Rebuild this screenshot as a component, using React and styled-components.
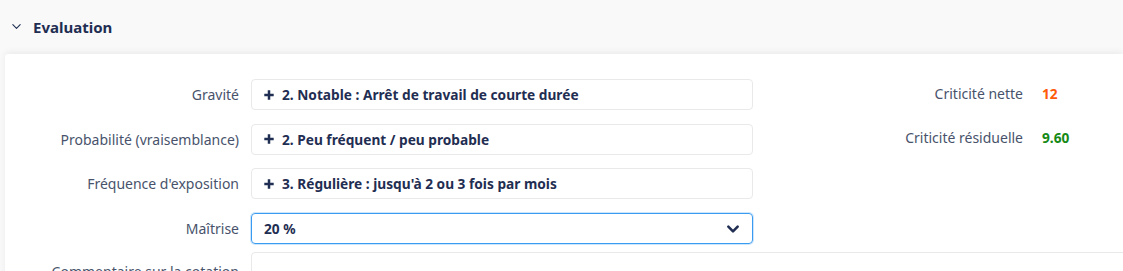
import React from "react";
import styled, { createGlobalStyle } from "styled-components";

const GlobalStyle = createGlobalStyle`
  html, body {
    margin: 0;
    padding: 0;
    background: #f9f9f9;
    font-family: "Noto Sans", "Open Sans", sans-serif;
    overflow: hidden;
  }
`;

const Page = styled.div`
  width: 1123px;
  height: 271px;
  background: #f9f9f9;
  overflow: hidden;
`;

const SectionHeader = styled.div`
  height: 54px;
  display: flex;
  align-items: center;
  gap: 11px;
  padding-left: 11px;
  box-sizing: border-box;
  padding-bottom: 1px;
`;

const SectionTitle = styled.h2`
  margin: 0;
  font-size: 15px;
  font-weight: 700;
  color: #1f2e52;
`;

const Panel = styled.div`
  margin-left: 5px;
  background: #fff;
  border-radius: 3px 0 0 0;
  box-shadow: 0 -2px 6px rgba(0, 0, 0, 0.06);
  padding-top: 25px;
  height: 300px;
  display: flex;
  flex-direction: column;
  gap: 8px;
`;

const TopArea = styled.div`
  display: flex;
`;

const FormColumn = styled.div`
  display: flex;
  flex-direction: column;
  gap: 13.7px;
`;

const Row = styled.div`
  display: flex;
  align-items: ${(p) => (p.$top ? "flex-start" : "center")};
`;

const Label = styled.label`
  width: 246px;
  flex-shrink: 0;
  padding-right: 12px;
  box-sizing: border-box;
  text-align: right;
  font-size: 14px;
  color: #48536b;
  white-space: nowrap;
  padding-top: ${(p) => (p.$top ? "10px" : "0")};
`;

const Field = styled.div`
  width: 502px;
  height: 31px;
  box-sizing: border-box;
  border: 1px solid ${(p) => (p.$focused ? "#3a9cf0" : "#e9e9e9")};
  box-shadow: ${(p) => (p.$focused ? "0 0 0 1px rgba(58,156,240,0.25)" : "none")};
  border-radius: 4px;
  display: flex;
  align-items: center;
  gap: 8px;
  padding: 0 12px 0 12px;
  font-size: 13.7px;
  font-weight: 700;
  color: #1f2e52;
`;

const TextArea = styled.div`
  width: 900px;
  flex-shrink: 0;
  height: 60px;
  box-sizing: border-box;
  border: 1px solid #e9e9e9;
  border-radius: 4px;
`;

const FieldText = styled.span`
  flex: 1;
  white-space: nowrap;
`;

const SideColumn = styled.div`
  margin-left: 120px;
  padding-top: 5px;
  display: grid;
  grid-template-columns: 150px auto;
  column-gap: 19px;
  row-gap: 25px;
  align-content: start;
`;

const SideLabel = styled.span`
  text-align: right;
  font-size: 14px;
  color: #48536b;
`;

const SideValue = styled.span`
  font-size: 13.7px;
  font-weight: 700;
  color: ${(p) => p.$color};
`;

const Plus = () => (
  <svg width="10" height="10" viewBox="0 0 10 10">
    <path d="M5 0.3v9.4M0.3 5h9.4" stroke="#1f2e52" strokeWidth="2.5" />
  </svg>
);

const Chevron = ({ size = 12, width = 1.4 }) => (
  <svg width={size} height={size} viewBox="0 0 12 12">
    <path d="M2 4l4 4 4-4" fill="none" stroke="#1f2e52" strokeWidth={width} strokeLinecap="round" strokeLinejoin="round" />
  </svg>
);

const rows = [
  { label: "Gravité", value: "2. Notable : Arrêt de travail de courte durée" },
  { label: "Probabilité (vraisemblance)", value: "2. Peu fréquent / peu probable" },
  { label: "Fréquence d'exposition", value: "3. Régulière : jusqu'à 2 ou 3 fois par mois" },
];

export default function App() {
  return (
    <Page>
      <GlobalStyle />
      <SectionHeader>
        <Chevron size={11} width={1.2} />
        <SectionTitle>Evaluation</SectionTitle>
      </SectionHeader>
      <Panel>
        <TopArea>
          <FormColumn>
            {rows.map((r) => (
              <Row key={r.label}>
                <Label>{r.label}</Label>
                <Field>
                  <Plus />
                  <FieldText>{r.value}</FieldText>
                </Field>
              </Row>
            ))}
            <Row>
              <Label>Maîtrise</Label>
              <Field $focused>
                <FieldText>20 %</FieldText>
                <Chevron size={14} width={2.2} />
              </Field>
            </Row>
          </FormColumn>
          <SideColumn>
            <SideLabel>Criticité nette</SideLabel>
            <SideValue $color="#ff5a0a">12</SideValue>
            <SideLabel>Criticité résiduelle</SideLabel>
            <SideValue $color="#168a16">9.60</SideValue>
          </SideColumn>
        </TopArea>
        <Row $top>
          <Label $top>Commentaire sur la cotation</Label>
          <TextArea />
        </Row>
      </Panel>
    </Page>
  );
}
